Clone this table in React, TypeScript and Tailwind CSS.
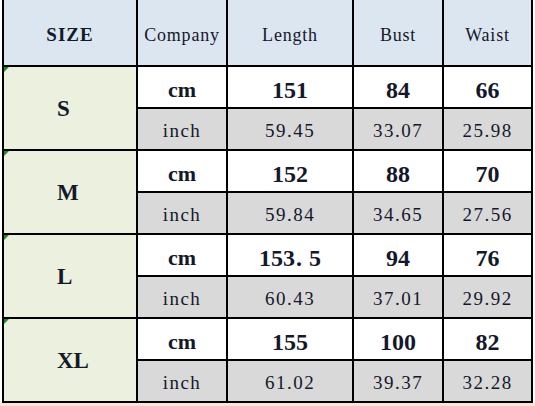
const rows = [
    { size: "S", cm: ["151", "84", "66"], inch: ["59.45", "33.07", "25.98"] },
    { size: "M", cm: ["152", "88", "70"], inch: ["59.84", "34.65", "27.56"] },
    { size: "L", cm: ["153.5", "94", "76"], inch: ["60.43", "37.01", "29.92"] },
    { size: "XL", cm: ["155", "100", "82"], inch: ["61.02", "39.37", "32.28"] },
];

const serif = "font-['Liberation_Serif','DejaVu_Serif',serif]";

function BigNum({ value }: { value: string }) {
    // the period renders wide in the original sheet font
    if (value.includes(".")) {
        const [a, b] = value.split(".");
        return (
            <>
                {a}
                <span className="ml-[1px] mr-[7px]">.</span>
                {b}
            </>
        );
    }
    return <>{value}</>;
}

export default function App() {
    return (
        <div className={`w-[535px] h-[406px] bg-white overflow-hidden text-[#15182b] ${serif}`}>
            <div className="ml-[2px] w-[531px] bg-black pl-[2px] pr-[2px] pb-[2px]">
                <div className="grid grid-cols-[132px_88px_124px_88px_87px] grid-rows-[65px_repeat(8,40px)] gap-[2px]">
                    <div className="bg-[#dce6f1] flex items-center justify-center pt-[6px] text-[19px] font-bold tracking-[1px]">
                        SIZE
                    </div>
                    {["Company", "Length", "Bust", "Waist"].map((h) => (
                        <div
                            key={h}
                            className="bg-[#dce6f1] flex items-center justify-center pt-[6px] text-[18px] tracking-[0.8px]"
                        >
                            {h}
                        </div>
                    ))}

                    {rows.map((r) => (
                        <div key={r.size} className="contents">
                            <div className="relative row-span-2 bg-[#ebf1de] flex items-center pl-[53px] pt-[2px]">
                                <span className="absolute left-0 top-0 w-0 h-0 border-t-[5px] border-r-[5px] border-t-[#1f8a2a] border-r-transparent" />
                                <span className="text-[23px] font-bold">{r.size}</span>
                            </div>
                            <div className="bg-white flex items-center justify-center pt-[5px] text-[22px] font-bold">
                                cm
                            </div>
                            {r.cm.map((v, i) => (
                                <div
                                    key={i}
                                    className="bg-white flex items-center justify-center pt-[5px] text-[24px] font-bold"
                                >
                                    <BigNum value={v} />
                                </div>
                            ))}
                            <div className="bg-[#d9d9d9] flex items-center justify-center pt-[5px] text-[19px] tracking-[1.5px]">
                                inch
                            </div>
                            {r.inch.map((v, i) => (
                                <div
                                    key={i}
                                    className="bg-[#d9d9d9] flex items-center justify-center pt-[5px] text-[19px] tracking-[1.5px]"
                                >
                                    {v}
                                </div>
                            ))}
                        </div>
                    ))}
                </div>
            </div>
            <div className="h-[10px] bg-[#fce4d6]" />
        </div>
    );
}
